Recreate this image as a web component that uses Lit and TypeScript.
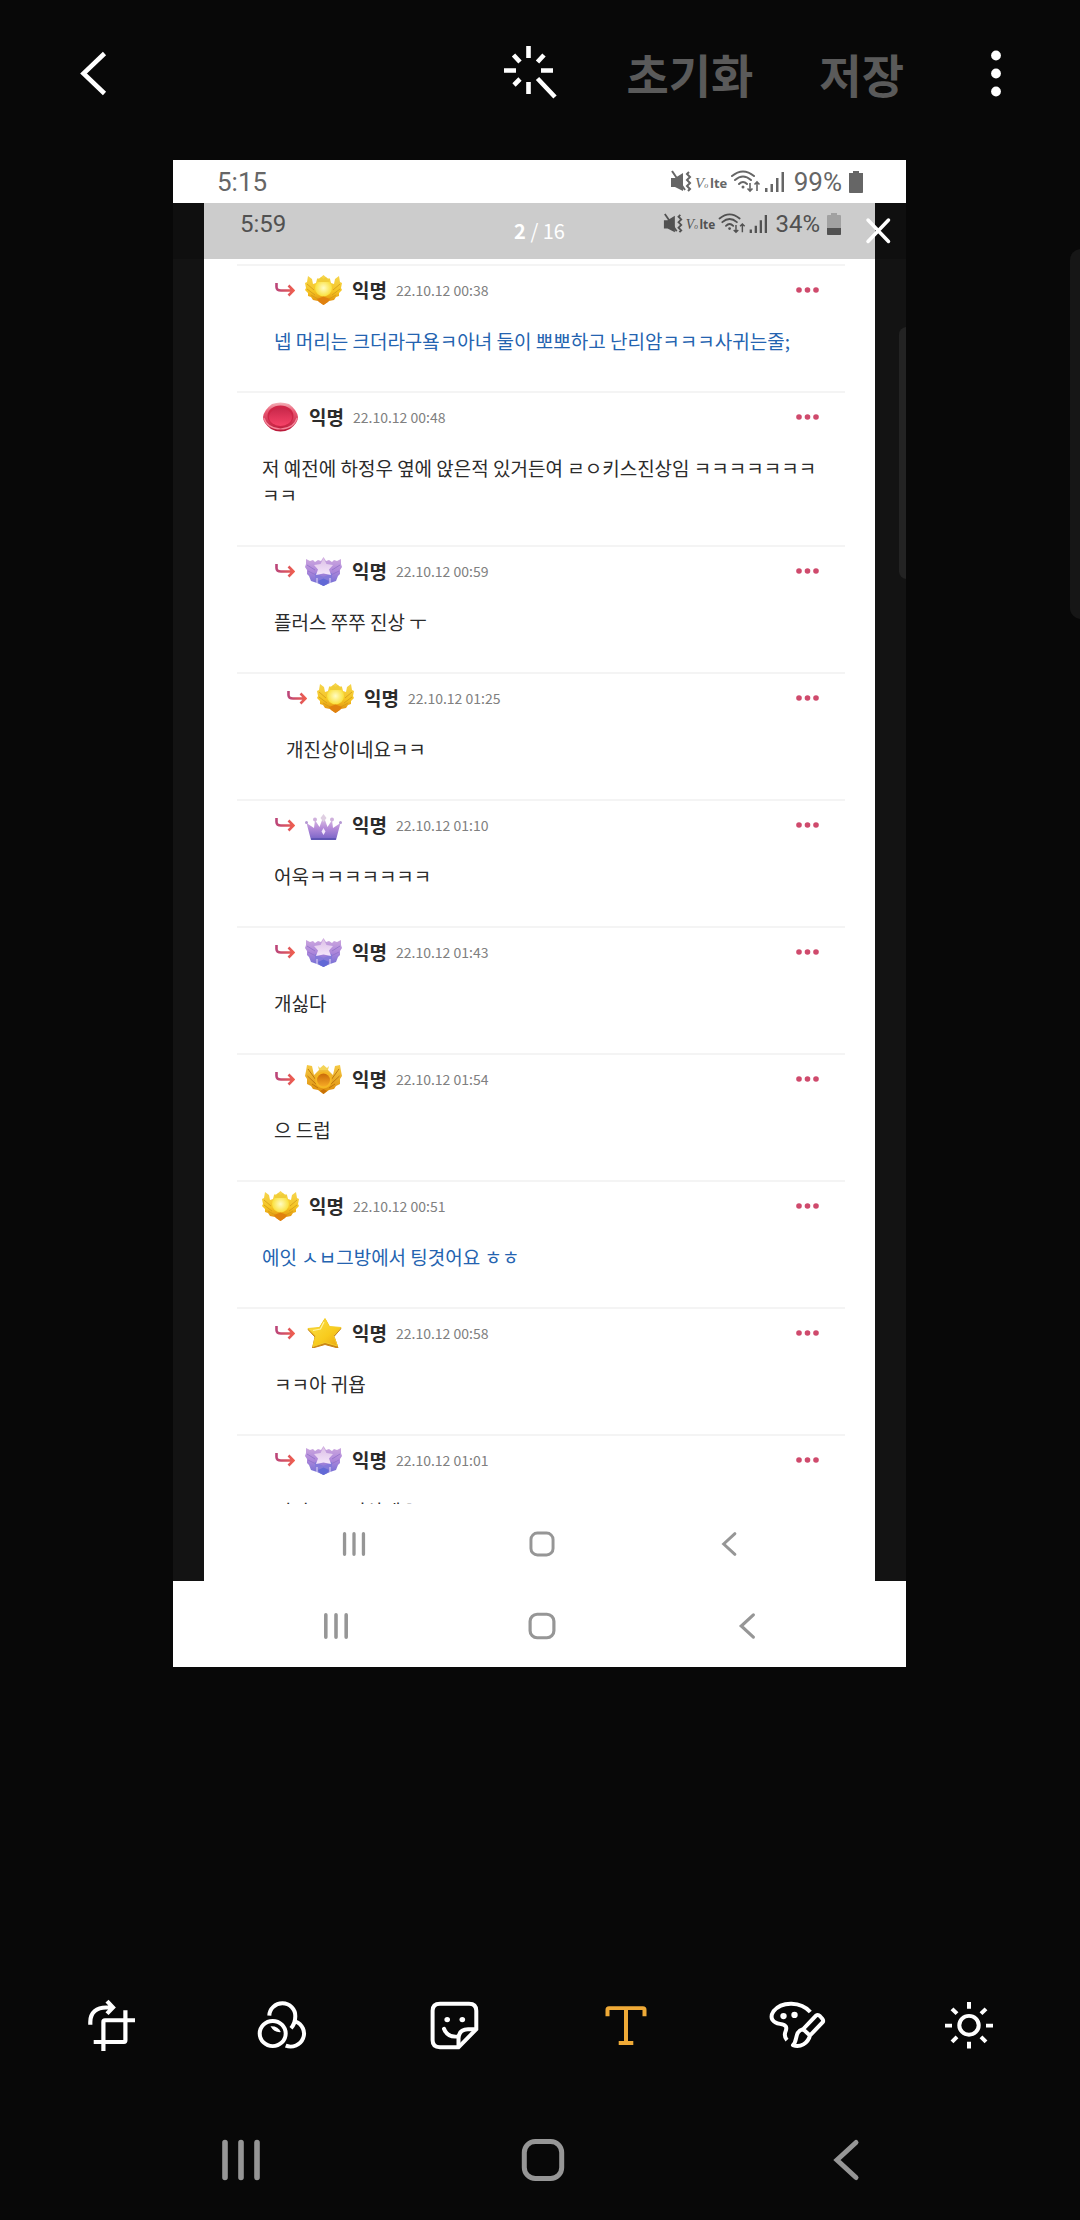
import { LitElement, html, svg, css, nothing } from "lit";
import { customElement, property } from "lit/decorators.js";

type Rank = "goldWing" | "goldRing" | "violetWing" | "crown" | "ruby" | "star";

interface Comment {
  rank: Rank;
  date: string;
  text: string;
  depth: number;
  mine?: boolean;
}

const COMMENTS: Comment[] = [
  { rank: "goldWing", date: "22.10.12 00:38", depth: 1, mine: true, text: "넵 머리는 크더라구욬ㅋ아녀 둘이 뽀뽀하고 난리암ㅋㅋㅋ사귀는줄;" },
  { rank: "ruby", date: "22.10.12 00:48", depth: 0, text: "저 예전에 하정우 옆에 앉은적 있거든여 ㄹㅇ키스진상임 ㅋㅋㅋㅋㅋㅋㅋㅋㅋ" },
  { rank: "violetWing", date: "22.10.12 00:59", depth: 1, text: "플러스 쭈쭈 진상 ㅜ" },
  { rank: "goldWing", date: "22.10.12 01:25", depth: 2, text: "개진상이네요ㅋㅋ" },
  { rank: "crown", date: "22.10.12 01:10", depth: 1, text: "어욱ㅋㅋㅋㅋㅋㅋㅋ" },
  { rank: "violetWing", date: "22.10.12 01:43", depth: 1, text: "개싫다" },
  { rank: "goldRing", date: "22.10.12 01:54", depth: 1, text: "으 드럽" },
  { rank: "goldWing", date: "22.10.12 00:51", depth: 0, mine: true, text: "에잇 ㅅㅂ그방에서 팅겻어요 ㅎㅎ" },
  { rank: "star", date: "22.10.12 00:58", depth: 1, text: "ㅋㅋ아 귀욥" },
  { rank: "violetWing", date: "22.10.12 01:01", depth: 1, text: "지인ㅋㅋ 진상세요" },
];

const badges: Record<Rank, unknown> = {
  goldWing: svg`
    <defs>
      <linearGradient id="g" x1="0" y1="0" x2="0" y2="1">
        <stop offset="0" stop-color="#f6d650" /><stop offset=".55" stop-color="#f5c422" /><stop offset="1" stop-color="#dd820a" />
      </linearGradient>
      <radialGradient id="c"><stop offset="0" stop-color="#fffcc4" /><stop offset="1" stop-color="#fae03a" /></radialGradient>
    </defs>
    <path d="M3 1 L7 4 L8 9 L11 8 L12 4 L15 3 L18.500 0 L22 3 L25 4 L26 8 L29 9 L30 4 L34 1 L35 7 L37 8 L36 13 L37 15 L34 18 L34 21 L31 22 L29 25 L24 26 L18.500 30 L13 26 L8 25 L6 22 L3 21 L3 18 L0 15 L1 13 L0 8 L2 7Z" fill="url(#g)" />
    <path d="M2 9 L9 15 M2 14 L10 20 M6 20 L13 24 M35 9 L28 15 M35 14 L27 20 M31 20 L24 24" stroke="#d29a18" stroke-width=".8" />
    <circle cx="18.500" cy="13" r="8.500" fill="url(#c)" />
    <path d="M12 3 L14 5 L16 2 L18.500 4 L21 2 L23 5 L25 3 L24 7 H13Z" fill="#f0cd38" />
    <path d="M12 24 L18.500 21.500 L25 24 L23 27 L18.500 30 L14 27Z" fill="#e0810f" />`,
  goldRing: svg`
    <defs>
      <linearGradient id="g" x1="0" y1="0" x2="0" y2="1">
        <stop offset="0" stop-color="#f6cb45" /><stop offset="1" stop-color="#dd8a08" />
      </linearGradient>
      <linearGradient id="c" x1="0" y1="0" x2="0" y2="1">
        <stop offset="0" stop-color="#c96a08" /><stop offset="1" stop-color="#f7aa25" />
      </linearGradient>
    </defs>
    <path d="M2 1 L7 2 L9 11 L12 8 L14 6 H23 L25 8 L28 11 L30 2 L35 1 L36 7 L37 12 L35 15 L35 20 L31 22 L29 25 L24 26 L18.500 30 L13 26 L8 25 L6 22 L2 20 L2 15 L0 12 L1 7Z" fill="url(#g)" />
    <path d="M3 5 L11 16 M2.500 12 L11 20 M34 5 L26 16 M34.500 12 L26 20 M7 20 L13 24 M30 20 L24 24" stroke="#b9720c" stroke-width=".9" />
    <path d="M13 2 L15 4 L18.500 1 L22 4 L24 2 L23 6 H14Z" fill="#f4d458" />
    <circle cx="18.500" cy="16" r="8.500" fill="#f5b722" />
    <circle cx="18.500" cy="16" r="6.500" fill="url(#c)" />
    <path d="M15 27 L18.500 25 L22 27 L18.500 30Z" fill="#c97206" />`,
  violetWing: svg`
    <defs>
      <linearGradient id="g" x1="0" y1="0" x2="0" y2="1">
        <stop offset="0" stop-color="#d0abdf" /><stop offset=".5" stop-color="#ac86da" /><stop offset="1" stop-color="#6b6cd4" />
      </linearGradient>
      <linearGradient id="c" x1="0" y1="0" x2="0" y2="1">
        <stop offset="0" stop-color="#dcc0e6" /><stop offset="1" stop-color="#f5e6fb" />
      </linearGradient>
    </defs>
    <path d="M1 3 L5 5 L8 4 L10 6 L13 4 L16 5 L18.500 1 L21 5 L24 4 L27 6 L29 4 L32 5 L36 3 L36 8 L37 11 L35 14 L35 18 L33 20 L31 25 L25 27 L18.500 30 L12 27 L6 25 L4 20 L2 18 L2 14 L0 11 L1 8Z" fill="url(#g)" />
    <path d="M2 9 L10 14 M3 15 L11 19 M35 9 L27 14 M34 15 L26 19" stroke="#8f70c8" stroke-width=".8" />
    <path d="M10 17 L18.500 21 L27 17 L27 23 L18.500 26 L10 23Z" fill="#8479da" />
    <path d="M18.500 2 L21.500 8 L28 9 L24 13.500 L26 19 L18.500 17.500 L11 19 L13 13.500 L9 9 L15.500 8Z" fill="url(#c)" />
    <path d="M13 25 L18.500 22.500 L24 25 L22 28 L18.500 30 L15 28Z" fill="#6269d6" />
    <path d="M12 22 V27 M25 22 V27" stroke="#e7dcf8" stroke-width="1" />`,
  crown: svg`
    <defs>
      <linearGradient id="g" x1="0" y1="0" x2="0" y2="1">
        <stop offset="0" stop-color="#e5cde6" /><stop offset=".5" stop-color="#b58bd8" /><stop offset="1" stop-color="#7562c6" />
      </linearGradient>
    </defs>
    <path d="M1.500 13 L9 18 L10 10 L14.500 17 L18.500 6 L22.500 17 L27 10 L28 18 L35.500 13 L31 30 H6Z" fill="url(#g)" />
    <circle cx="1.500" cy="12.500" r="1.500" fill="#b497d2" /><circle cx="35.500" cy="12.500" r="1.500" fill="#b497d2" />
    <circle cx="10" cy="9.500" r="2" fill="#cfb0dc" /><circle cx="27" cy="9.500" r="2" fill="#cfb0dc" />
    <path d="M18.500 4 L21.500 8 L18.500 12 L15.500 8Z" fill="#dfcfe2" />
    <path d="M18.500 18 L20.500 21.500 L18.500 25 L16.500 21.500Z" fill="#f3e8fb" />
    <path d="M6 28 H31 L30.500 30 H6.500Z" fill="#5f55b4" />`,
  ruby: svg`
    <defs>
      <linearGradient id="g" x1="0" y1="0" x2="0" y2="1">
        <stop offset="0" stop-color="#f3b4ba" /><stop offset=".3" stop-color="#ea5a74" /><stop offset="1" stop-color="#b81637" />
      </linearGradient>
      <linearGradient id="c" x1="0" y1="0" x2="0" y2="1">
        <stop offset="0" stop-color="#c8284a" /><stop offset="1" stop-color="#f74368" />
      </linearGradient>
    </defs>
    <path d="M10 2 Q18.500 -1 27 2 Q35 8 36 15 Q36 21 28 27 Q18.500 32 9 27 Q1 21 1 15 Q2 8 10 2Z" fill="url(#g)" />
    <path d="M2 16 Q5 26.500 18.500 27 Q32 26.500 35 16" fill="none" stroke="#f58297" stroke-width="1.200" />
    <ellipse cx="18.500" cy="14" rx="13" ry="10.500" fill="#cf2546" />
    <ellipse cx="18.500" cy="15" rx="11.500" ry="9" fill="url(#c)" />`,
  star: svg`
    <defs>
      <linearGradient id="g" x1="0" y1="0" x2="1" y2="1">
        <stop offset="0" stop-color="#fbe04a" /><stop offset=".6" stop-color="#f8cb1d" /><stop offset="1" stop-color="#eaa312" />
      </linearGradient>
    </defs>
    <path d="M20 1 L24.500 9.500 L36 10.500 L29 18.500 L33 30 L20 26.500 L7.500 30 L10 19 L3 11.500 L14.500 10Z" fill="#c98414" stroke="#c98414" stroke-linejoin="round" />
    <path d="M20 0.500 L24.500 8.500 L36 9.500 L28.500 17.500 L32.500 28 L20 24.500 L8 28.500 L10.500 18 L3 10.500 L14.500 9.500Z" fill="url(#g)" stroke="#f5cf2a" stroke-linejoin="round" />
    <path d="M19 4 L15.500 11 L8 12.500" fill="none" stroke="#fff3a0" stroke-width="1.200" />`,
};

@customElement("rank-badge")
export class RankBadge extends LitElement {
  @property() rank: Rank = "star";

  static styles = css`
    :host { display: block; flex: none; }
    .badge { display: block; width: 37px; height: 30px; }
  `;

  render() {
    return html`<svg class="badge" viewBox="0 0 37 30" aria-hidden="true">${badges[this.rank]}</svg>`;
  }
}

@customElement("system-nav")
export class SystemNav extends LitElement {
  static styles = css`
    :host { display: grid; grid-template-columns: repeat(3, 1fr); align-items: center; padding: 0 7.7% 0 8.3%; }
    .key { display: flex; justify-content: center; align-items: center; border: 0; padding: 0; background: none; color: #969696; }
    .icon { display: block; width: var(--key-size, 44px); height: var(--key-size, 44px); }
  `;

  render() {
    return html`
      <button class="key" aria-label="최근 앱">
        <svg class="icon" viewBox="0 0 44 44" fill="none" stroke="currentColor" stroke-width="5.600" stroke-linecap="round">
          <path d="M6 4.500 V39.500 M22 4.500 V39.500 M38 4.500 V39.500" />
        </svg>
      </button>
      <button class="key" aria-label="홈">
        <svg class="icon" viewBox="0 0 44 44" fill="none" stroke="currentColor" stroke-width="5">
          <rect x="3.300" y="3.500" width="37.400" height="37" rx="11" />
        </svg>
      </button>
      <button class="key" aria-label="뒤로">
        <svg class="icon" viewBox="0 0 44 44" fill="none" stroke="currentColor" stroke-width="5" stroke-linecap="round">
          <path d="M32 4.500 L13 22 L32 39.500" />
        </svg>
      </button>
    `;
  }
}

@customElement("status-bar")
export class StatusBar extends LitElement {
  @property() time = "";
  @property({ type: Number }) level = 100;

  static styles = css`
    :host { display: flex; align-items: center; color: #666; font: 26px/30px Roboto, sans-serif; }
    .time { flex: 1; }
    .signals { flex: none; width: var(--signals, 114px); height: 24px; margin-right: var(--signals-gap, 10px); }
    .battery { flex: none; width: 14px; height: 22px; margin-left: 7px; }
    .carrier { font: italic 15px "Liberation Serif", serif; }
    .small { font-size: 8px; }
    .lte { font: bold 13px "Open Sans", sans-serif; }
  `;

  render() {
    const fill = Math.round((19 * this.level) / 100);
    return html`
      <span class="time">${this.time}</span>
      <svg class="signals" viewBox="0 0 114 24" fill="currentColor" role="img" aria-label="신호">
        <path d="M1 8 H5 L13 3 V21 L5 17 H1Z" />
        <path d="M2 1 L15 20" stroke="currentColor" stroke-width="2" />
        <path d="M19 2 l-2 2 l3 3 l-3 3 l3 3 l-3 3 l3 3 l-2 2" fill="none" stroke="currentColor" stroke-width="2" />
        <text class="carrier" x="25" y="18">V<tspan class="small">o</tspan></text>
        <text class="lte" x="40" y="18">lte</text>
        <g fill="none" stroke="currentColor" stroke-width="2" stroke-linecap="round">
          <path d="M62 6 Q73 -3 84 6" />
          <path d="M65 10 Q73 3 81 10" />
          <path d="M69 14 Q73 10 77 14" />
        </g>
        <circle cx="73" cy="17" r="1.500" />
        <path d="M80 13 V21 M77.500 18.500 L80 21 L82.500 18.500 M87 21 V12 M84.500 14.500 L87 12 L89.500 14.500" fill="none" stroke="currentColor" stroke-width="1.600" />
        <path d="M95 18 h2.500 v4 h-2.500z M100.500 14 h2.500 v8 h-2.500z M106 8 h2.500 v14 h-2.500z M111.500 2 h2.500 v20 h-2.500z" />
      </svg>
      <span>${this.level}%</span>
      <svg class="battery" viewBox="0 0 14 22" fill="currentColor" role="img" aria-label="배터리">
        <path d="M4 0 H10 V2 H13 Q14 2 14 3 V21 Q14 22 13 22 H1 Q0 22 0 21 V3 Q0 2 1 2 H4Z" opacity=".35" />
        <path d="M0 ${21 - fill} H14 V21 Q14 22 13 22 H1 Q0 22 0 21Z" />
        ${this.level > 90 ? svg`<path d="M4 0 H10 V3 H4Z" />` : nothing}
      </svg>
    `;
  }
}

@customElement("comment-row")
export class CommentRow extends LitElement {
  @property({ attribute: false }) comment!: Comment;

  static styles = css`
    :host { display: block; border-top: 2px solid #f4f4f4; padding: 9px 25px 37px; }
    .row-0 { padding-left: 0; }
    .row-1 { padding-left: 12px; }
    .row-2 { padding-left: 24px; }
    .head { display: flex; align-items: center; height: 30px; }
    .arrow { flex: none; width: 20px; height: 16px; margin: 0 10px 0 1px; }
    .name { margin-left: 10px; font-size: 19px; line-height: 30px; font-weight: 700; color: #2b2b2b; }
    .date { flex: 1; margin-left: 9px; font-size: 14px; color: #808080; }
    .more { display: flex; border: 0; padding: 0; background: none; }
    .dots { display: block; width: 25px; height: 12px; }
    .text { margin: 22px 0 0; font-size: 19px; line-height: 27px; color: #2b2b2b; word-break: break-all; }
    .mine { color: #2463b0; }
  `;

  render() {
    const c = this.comment;
    return html`
      <article class="row-${c.depth}">
        <header class="head">
          ${c.depth > 0
            ? html`<svg class="arrow" viewBox="0 0 20 16" fill="none" stroke-width="2.600" aria-hidden="true">
                <defs>
                  <linearGradient id="a" gradientUnits="userSpaceOnUse" x1="0" y1="0" x2="20" y2="0">
                    <stop offset="0" stop-color="#b8447c" /><stop offset="1" stop-color="#f2604c" />
                  </linearGradient>
                </defs>
                <path d="M1.500 1 V5 Q1.500 8.500 6 8.500 H18 M13.500 3.500 L18.500 8.500 L13.500 13.500" stroke="url(#a)" />
              </svg>`
            : nothing}
          <rank-badge .rank=${c.rank}></rank-badge>
          <span class="name">익명</span>
          <time class="date">${c.date}</time>
          <button class="more" aria-label="더보기">
            <svg class="dots" viewBox="0 0 25 12" fill="#cf4a6c">
              <circle cx="4" cy="6" r="2.800" /><circle cx="12.500" cy="6" r="2.800" /><circle cx="21" cy="6" r="2.800" />
            </svg>
          </button>
        </header>
        <p class="text ${c.mine ? "mine" : ""}">${c.text}</p>
      </article>
    `;
  }
}

const TOOLS: { label: string; active?: boolean; icon: unknown }[] = [
  {
    label: "자르기",
    icon: svg`<path d="M9.300 30 V27 C9.300 17 16 12 25 12 H31 M26 5.500 L32 12 L26 18.500" stroke-width="4.200" />
      <path d="M22.400 57 V27 Q22.400 25.300 24 25.300 H54 M44.400 15 V46 Q44.400 47.700 43 47.700 H12.700" stroke-width="4.200" />`,
  },
  {
    label: "필터",
    icon: svg`<circle cx="20.700" cy="39" r="13" />
      <path d="M17.300 20.500 A13 13 0 0 1 43.300 21 Q43.300 28.500 39 33.500" />
      <path d="M43.500 26.500 A13.300 13.300 0 0 1 33.700 51.500" />
      <path d="M18.500 31.500 Q26 31 28.800 37.500 Q22 38 18.500 31.500Z" fill="currentColor" stroke="none" />`,
  },
  {
    label: "스티커",
    icon: svg`<path d="M34.500 53.200 H16 Q8.600 53.200 8.600 46 V15.500 Q8.600 8.200 16 8.200 H45 Q52.300 8.200 52.300 15.500 V34.500Z" />
      <path d="M34.500 53 V44 Q35 34.600 44 34.600 H52" />
      <path d="M20 34 Q23.500 43.500 34 42" stroke-linecap="round" />
      <circle cx="23.200" cy="24.600" r="2.800" fill="currentColor" stroke="none" />
      <circle cx="38.300" cy="24.600" r="2.800" fill="currentColor" stroke="none" />`,
  },
  {
    label: "텍스트",
    active: true,
    icon: svg`<path d="M11.500 21 V14.500 Q11.500 12.700 13 12.700 H47 Q48.500 12.700 48.500 14.500 V21 M30 13 V48.500 M22.700 48.700 H37.300" />`,
  },
  {
    label: "그리기",
    icon: svg`<path d="M43.300 16.700 C34 6 15 5 6.500 16 C2 23 6 28 13 29 C20 30 20 33 18.500 37 C17 41 18 43.500 20 45.800" />
      <circle cx="16.500" cy="20.900" r="3.200" fill="currentColor" stroke="none" />
      <circle cx="27.500" cy="19.800" r="3.200" fill="currentColor" stroke="none" />
      <path d="M36 34.500 L49 20.500 Q51 19 53 21 L55.500 24 Q56.800 26 55.500 27.500 L43 41 L36 34.500 C27 37 31 46 26 51 C33 54 41 49 43 41" stroke-linejoin="round" />`,
  },
  {
    label: "밝기",
    icon: svg`<circle cx="30" cy="30.500" r="9.700" />
      <path d="M30 6.500 V13.500 M30 47.500 V54.500 M6 30.800 H13 M47 30.800 H54 M13 13.500 L18 18.500 M42 42.500 L47 47.500 M47 13.500 L42 18.500 M18 42.500 L13 47.500" />`,
  },
];

@customElement("app-root")
export class AppRoot extends LitElement {
  static styles = css`
    :host {
      position: relative;
      display: flex;
      flex-direction: column;
      min-height: 100vh;
      overflow: hidden;
      background: #080808;
      color: #fff;
      font-family: "Noto Sans CJK KR", sans-serif;
    }
    .top { display: flex; align-items: center; gap: 66px; box-sizing: border-box; height: 160px; padding: 0 58px 14px 66px; }
    .top-button { display: flex; align-items: center; justify-content: center; border: 0; padding: 0; background: none; color: inherit; font: inherit; }
    .back { margin-right: auto; }
    .back-icon { width: 56px; height: 60px; }
    .wand-icon { width: 56px; height: 60px; }
    .menu-icon { width: 52px; height: 60px; }
    .word { font-size: 46px; line-height: 64px; font-weight: 700; color: #5a5a5a; }
    .stage { flex: 1; padding: 0 174px 0 173px; }
    .photo { display: flex; flex-direction: column; aspect-ratio: 733 / 1507; background: #fff; overflow: hidden; }
    .outer-status { flex: none; height: 43px; padding: 0 43px 0 44px; }
    .outer-nav { flex: none; box-sizing: border-box; height: 86px; padding-top: 3px; --key-size: 28px; }
    .viewer { position: relative; flex: 1; min-height: 0; display: flex; padding: 0 31px; background: #131313; overflow: hidden; }
    .page { flex: 1; min-width: 0; display: flex; flex-direction: column; background: #fff; }
    .inner-status { flex: none; height: 42px; padding: 0 34px 0 36px; font-size: 24px; --signals: 104px; --signals-gap: 8px; }
    .comments { flex: 1; min-height: 0; overflow: hidden; padding: 19px 30px 0 33px; }
    .inner-nav { flex: none; box-sizing: border-box; height: 77px; padding-top: 3px; --key-size: 26px; }
    .veil {
      position: absolute;
      inset: 0 0 auto 0;
      display: grid;
      grid-template-columns: 1fr auto 1fr;
      align-items: center;
      height: 56px;
      padding: 0 8px;
      background: rgba(0, 0, 0, 0.2);
    }
    .count { grid-column: 2; font-size: 20px; line-height: 28px; }
    .close { justify-self: end; display: flex; border: 0; padding: 0; background: none; color: #fff; }
    .close-icon { width: 40px; height: 40px; }
    .handle { position: absolute; right: -8px; top: 124px; width: 15px; height: 252px; border-radius: 8px; background: #232323; }
    .edge { position: absolute; right: -12px; top: 249px; width: 22px; height: 370px; border-radius: 12px; background: #161616; }
    .tools { display: grid; grid-template-columns: repeat(6, 1fr); align-items: center; height: 174px; padding: 0 25px; }
    .tool { display: flex; justify-content: center; border: 0; padding: 0; background: none; color: #fff; }
    .active { color: #efaa37; }
    .tool-icon { width: 60px; height: 60px; }
    .nav { box-sizing: border-box; height: 108px; padding-bottom: 12px; }
  `;

  render() {
    return html`
      <header class="top">
        <button class="top-button back" aria-label="뒤로">
          <svg class="back-icon" viewBox="0 0 56 60" fill="none" stroke="currentColor" stroke-width="4.600">
            <path d="M38.500 10.500 L17.500 30.500 L38.500 50.500" />
          </svg>
        </button>
        <button class="top-button" aria-label="자동 보정">
          <svg class="wand-icon" viewBox="0 0 56 60" fill="none" stroke="currentColor" stroke-width="4.600">
            <path d="M24.500 3 V15 M24.500 39 V51 M0 27.500 H12 M37 27.500 H49 M9.500 12 L16 19 M40 12 L33.500 19 M10 42 L16 36 M33.500 35.500 L51 54" />
          </svg>
        </button>
        <button class="top-button word">초기화</button>
        <button class="top-button word">저장</button>
        <button class="top-button" aria-label="메뉴">
          <svg class="menu-icon" viewBox="0 0 52 60" fill="currentColor">
            <circle cx="26" cy="12.500" r="4.900" /><circle cx="26" cy="30.500" r="4.900" /><circle cx="26" cy="48.500" r="4.900" />
          </svg>
        </button>
      </header>

      <main class="stage">
        <section class="photo">
          <status-bar class="outer-status" time="5:15" level="99"></status-bar>
          <div class="viewer">
            <div class="page">
              <status-bar class="inner-status" time="5:59" level="34"></status-bar>
              <div class="comments">
                ${COMMENTS.map((c) => html`<comment-row .comment=${c}></comment-row>`)}
              </div>
              <system-nav class="inner-nav"></system-nav>
            </div>
            <div class="veil">
              <span class="count"><b>2</b> / 16</span>
              <button class="close" aria-label="닫기">
                <svg class="close-icon" viewBox="0 0 40 40" fill="none" stroke="currentColor" stroke-width="3.500" stroke-linecap="round">
                  <path d="M10 9 L30.500 30.500 M30.500 9 L10 30.500" />
                </svg>
              </button>
            </div>
            <span class="handle"></span>
          </div>
          <system-nav class="outer-nav"></system-nav>
        </section>
      </main>

      <nav class="tools" aria-label="편집 도구">
        ${TOOLS.map(
          (t) => html`<button class="tool ${t.active ? "active" : ""}" aria-label=${t.label}>
            <svg class="tool-icon" viewBox="0 0 60 60" fill="none" stroke="currentColor" stroke-width="4">
              <g transform="translate(0 .8) scale(1 .968)">${t.icon}</g>
            </svg>
          </button>`
        )}
      </nav>
      <system-nav class="nav"></system-nav>
      <span class="edge"></span>
    `;
  }
}
